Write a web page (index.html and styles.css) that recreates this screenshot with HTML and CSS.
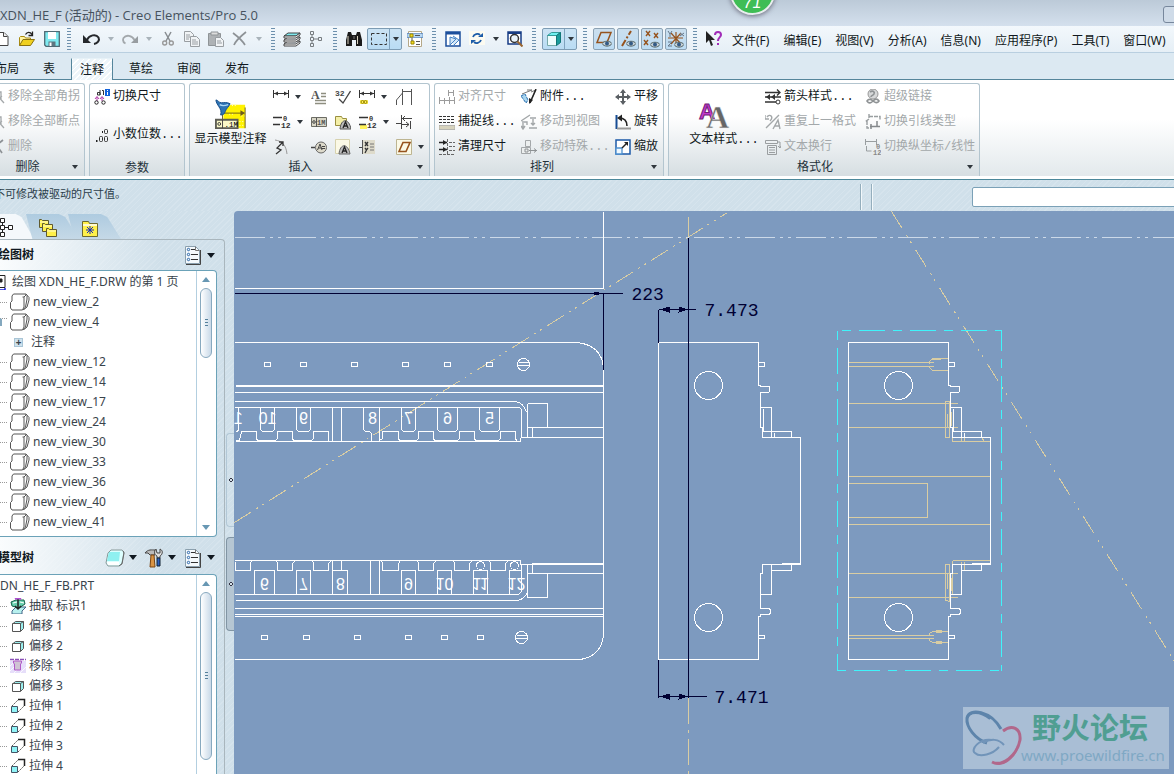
FILE: index.html
```html
<!DOCTYPE html>
<html lang="zh-CN">
<head>
<meta charset="utf-8">
<title>XDN_HE_F (活动的) - Creo Elements/Pro 5.0</title>
<link rel="stylesheet" href="styles.css">
</head>
<body>
<svg class="defs" aria-hidden="true">
  <symbol id="new" viewBox="0 0 16 16"><path d="M2 1.500h8l4 4v9H2z" fill="#fff" stroke="#444"/><path d="M9.500 1.500v4h4" fill="#eee" stroke="#444"/></symbol>
  <symbol id="open" viewBox="0 0 16 16"><path d="M.5 14.500v-8l1-1h4l1 1.500h5v2" fill="#fff3a0" stroke="#a98a10"/><path d="M.5 14.500l3.500-6h11.500l-4 6z" fill="#f0d020" stroke="#8a7210"/><path d="M6.500 3.500C8 1 11 .5 13 3.500M13.500 .5v4h-4" fill="none" stroke="#222" stroke-width="1.300"/></symbol>
  <symbol id="save" viewBox="0 0 16 16"><path d="M.7 .7h14.600v14.600H2l-1.300-1.300z" fill="#7feaf0" stroke="#4f6a74" stroke-width="1.300"/><path d="M4 1h8v7H4z" fill="#fff"/><path d="M4.500 10.500h7V15h-7z" fill="#5d7680"/><path d="M5.500 11.500h2V15h-2z" fill="#fff"/></symbol>
  <symbol id="undo" viewBox="0 0 18 16"><path d="M4 9C6 4 13 2.500 15.500 6.500c1.500 3-1 6-4.500 6.500" fill="none" stroke="#25282c" stroke-width="2"/><path d="M0 4v8h8z" fill="#25282c"/></symbol>
  <symbol id="redo" viewBox="0 0 18 16"><path d="M13.500 9C11 4 5 3.500 2.500 7c-1 2.500 0 4.500 2 5.500" fill="none" stroke="#a3a8ac" stroke-width="1.800"/><path d="M17 5v7h-7z" fill="#989da1"/></symbol>
  <symbol id="cut" viewBox="0 0 16 16"><path d="M5 1l5 9M11 1L6 10" stroke="#888d91" stroke-width="1.500"/><circle cx="4.700" cy="12" r="2" fill="none" stroke="#999" stroke-width="1.400"/><circle cx="11.300" cy="12" r="2" fill="none" stroke="#999" stroke-width="1.400"/></symbol>
  <symbol id="copy" viewBox="0 0 16 16"><g fill="#f1f4f6" stroke="#999ea2"><path d="M.5 .5h6l3 3v7h-9z"/><path d="M6.500 5.500h6l3 3v7h-9z"/></g><path d="M2 4h4M2 6h4M2 8h3M8 9h4M8 11h6M8 13h6" stroke="#999ea2"/></symbol>
  <symbol id="paste" viewBox="0 0 16 16"><path d="M.5 2.500h12v12H.5z" fill="#aeb2b5" stroke="#8f9497"/><path d="M3 1h7v3H3z" fill="#ddd" stroke="#8f9497"/><path d="M7.500 6.500h5l3 3v6h-8z" fill="#f1f4f6" stroke="#999ea2"/><path d="M9 10h4M9 12h5" stroke="#999ea2"/></symbol>
  <symbol id="del" viewBox="0 0 16 16"><path d="M1 2c4 3 9 7 12 12M14 1C9 5 4 9 2 14" fill="none" stroke="#8d9296" stroke-width="1.700"/></symbol>
  <symbol id="layers" viewBox="0 0 18 16"><g stroke="#444"><path d="M1 13l4-3h12l-4 3zM1 13v2h12l4-3v-2" fill="#fff"/><path d="M1 9l4-3h12l-4 3zM1 9v2h12l4-3V6" fill="#fff"/><path d="M1 5l4-3h12l-4 3z" fill="#7fe9ee"/><path d="M1 5v2h12l4-3V2l-4 3z" fill="#fff"/></g></symbol>
  <symbol id="nodes" viewBox="0 0 16 16"><g fill="none" stroke="#777c80"><path d="M2.500 .5h3v3h-3zM2.500 6.500h3v3h-3zM2.500 12.500h3v3h-3zM10.500 6.500h3v3h-3zM4 4v2M4 10v2M6 8h4"/></g></symbol>
  <symbol id="binoc" viewBox="0 0 18 16"><path d="M3 1h3l1 3h4l1-3h3l2 8v6h-6V9H7v6H1V9z" fill="#1b1b1b"/><path d="M3 5v8M12.500 5v8" stroke="#d8d2c0"/><path d="M9 5v3" stroke="#777"/></symbol>
  <symbol id="marquee" viewBox="0 0 18 16"><path d="M1.500 2.500h15v11h-15z" fill="none" stroke="#333" stroke-dasharray="3 2"/></symbol>
  <symbol id="mtree" viewBox="0 0 16 16"><path d="M1.500 .5h13v15h-13z" fill="#fff" stroke="#b5a888"/><path d="M0 2.500h16v4H0z" fill="#b6d6f2" stroke="#3d6fae" stroke-width=".6"/><path d="M3 3h3v3H3zM4 10h3v3H4z" fill="#f5df20" stroke="#9a8600"/><path d="M8 4.500h5M9 10.500h4M9 13.500h4M5 7v3" stroke="#555"/></symbol>
  <symbol id="repaint" viewBox="0 0 16 16"><path d="M1 1h14v14H1z" fill="#fff" stroke="#1c4f9c" stroke-width="1.500"/><path d="M1 1h14v2.500H1z" fill="#1c4f9c"/><path d="M5 6l6 2-6 6zM8 5l6 4-6 6" fill="#d3e7f8" stroke="#4582c4"/></symbol>
  <symbol id="refresh" viewBox="0 0 16 16"><path d="M0 0h16v14H0z" fill="#fcfbf1"/><path d="M4 6c1-3 5-4 7-2M12 9c-1 3-5 4-7 2" fill="none" stroke="#1c5ca8" stroke-width="1.800"/><path d="M9 6h5V2zM7 9H2v4z" fill="#1c5ca8"/></symbol>
  <symbol id="zoomfit" viewBox="0 0 16 16"><path d="M1 1h13v12H1z" fill="#fff" stroke="#173d85" stroke-width="1.500"/><path d="M1 1h13v2H1z" fill="#173d85"/><circle cx="7.500" cy="7.500" r="4" fill="#e8f3fb" stroke="#333" stroke-width="1.500"/><path d="M10.500 10.500l5 5" stroke="#9a6630" stroke-width="2"/></symbol>
  <symbol id="cube" viewBox="0 0 16 16"><path d="M1.500 4.500h9v10h-9z" fill="#eefcfc" stroke="#7aa"/><path d="M1.500 4.500l4-3h9l-4 3z" fill="#6ff0f0" stroke="#399"/><path d="M10.500 4.500l4-3v10l-4 3z" fill="#1a9c9c" stroke="#177"/></symbol>
  <symbol id="eye" viewBox="0 0 10 6"><path d="M0 3C2 0 8 0 10 3 8 6.500 2 6.500 0 3z" fill="#c9d3d8" stroke="#566"/><circle cx="5" cy="3" r="2" fill="#345b86"/></symbol>
  <symbol id="plane" viewBox="0 0 18 18"><path d="M2 12.500L6 2.500h10l-4 10z" fill="none" stroke="#96531d" stroke-width="1.500"/><use href="#eye" x="7" y="10" width="10" height="7"/></symbol>
  <symbol id="axis" viewBox="0 0 18 18"><path d="M3 16L12 1" stroke="#96531d" stroke-width="2" stroke-dasharray="7 2 2 2"/><use href="#eye" x="7" y="10" width="10" height="7"/></symbol>
  <symbol id="points" viewBox="0 0 18 18"><path d="M3 1l4 5M7 1L3 6M11 3l4 5M15 3l-4 5M1 10l4 5M5 10l-4 5" stroke="#96531d" stroke-width="1.400"/><use href="#eye" x="7" y="11" width="10" height="7"/></symbol>
  <symbol id="csys" viewBox="0 0 18 18"><path d="M1 8h15M9 2v11M4 3l10 11M14 3L4 14" stroke="#96531d" stroke-width="1.200"/><path d="M1 1l2 3 2-3M3 4v3M13 3l4 3M17 3l-4 3M1 12h4l-4 4h4" fill="none" stroke="#678"/><use href="#eye" x="7" y="11" width="10" height="7"/></symbol>
  <symbol id="what" viewBox="0 0 16 16"><path d="M0 0v12l3-3 2 6 2-1-2-5h4z" fill="#222"/><path d="M9 4c0-4 6-4 6 0 0 2-3 2.500-3 6M12 12v2" fill="none" stroke="#a12cb8" stroke-width="2"/></symbol>
  <symbol id="jog" viewBox="0 0 16 16"><path d="M2 3h10v7M5 13l8-6M8 6l7 8" fill="none" stroke="#a4a8aa" stroke-width="1.300"/></symbol>
  <symbol id="swapdim" viewBox="0 0 16 16"><path d="M6 1v5M3.500 3.500H6V6H3.500zM8 1.500h1.500V6" fill="none" stroke="#333"/><path d="M3 8v4M8 8v4M1 10l2-2.500L5 10M6 10l2-2.500L10 10" fill="none" stroke="#b23aa8"/><circle cx="2.500" cy="13.500" r="1.700" fill="none" stroke="#222"/><circle cx="9.500" cy="13.500" r="1.700" fill="none" stroke="#222"/><path d="M11 0h5v7h-5z" fill="#1464dc"/><path d="M13.500 1v1M13.500 3v3" stroke="#fff"/></symbol>
  <symbol id="decimal" viewBox="0 0 16 16"><path d="M2 13h1.500v2H2zM8 4h1v2H8z" fill="#222"/><rect x="5.500" y="9.500" width="3" height="5" rx="1" fill="none" stroke="#333"/><rect x="10.500" y="9.500" width="3" height="5" rx="1" fill="none" stroke="#333"/><rect x="10.500" y="2.500" width="3" height="4" rx="1" fill="none" stroke="#333"/></symbol>
  <symbol id="showann" viewBox="0 0 34 34"><path d="M9 10l8-4h15v25H9z" fill="#fff200"/><path d="M10 8h2M18 7h5M25 5h5M15 16h4M28 18h4M26 24h6M26 28h6" stroke="#fff" stroke-dasharray="1 2"/><path d="M10 15h20M32 9v22M8 16v6" stroke="#6c5b1c"/><path d="M27 12l5 3-5 3z" fill="#6c5b1c"/><path d="M1 1c2 0 3 3 6 3s5-1 9 1c-1 3-4 5-5 8-1 3-2 4-5 4 1-4 0-6-2-9C3 6 1 4 1 1z" fill="#2e74b4" stroke="#164d89"/><path d="M5 6c3 2 6 1 9 0" fill="none" stroke="#acd7f5" stroke-width="1.500"/><path d="M1 22h23v9H1z" fill="#fbf9c8" stroke="#5e5e55" stroke-width="2"/><path d="M8 22v9" stroke="#444"/><circle cx="4.500" cy="26.500" r="1.500" fill="none" stroke="#333"/><text x="10" y="30" font-size="8">.1M</text></symbol>
  <symbol id="dim" viewBox="0 0 16 16"><path d="M.5 1v8M15.500 1v8M1 4.500h14" stroke="#333"/><path d="M1 4.500l4-2v4zM15 4.500l-4-2v4z" fill="#333"/></symbol>
  <symbol id="dimy" viewBox="0 0 16 16"><use href="#dim" width="16" height="16"/><path d="M1 11h8v4H1z" fill="#fff25a"/><circle cx="3.500" cy="13" r="1.500" fill="none" stroke="#9a8500"/><circle cx="6.500" cy="13" r="1.500" fill="none" stroke="#9a8500"/></symbol>
  <symbol id="note" viewBox="0 0 16 16"><text x="0" y="10" font-size="12" font-weight="bold" font-family="Liberation Serif" fill="#555">A</text><path d="M10 4.500h5M10 7.500h5M4 11.500h11M4 14.500h11" stroke="#8e8e80" stroke-width="1.300"/></symbol>
  <symbol id="surf" viewBox="0 0 16 16"><text x="0" y="7" font-size="8" font-weight="bold" fill="#444">32</text><path d="M4 10l4 4L15.500 2" fill="none" stroke="#444" stroke-width="1.300"/></symbol>
  <symbol id="cham" viewBox="0 0 16 16"><path d="M.5 16V11l6-7M6.500 0v16M15.500 0v16M7 2.500h8" fill="none" stroke="#555"/></symbol>
  <symbol id="ord" viewBox="0 0 18 16"><path d="M0 3.500h9M0 10.500h7" stroke="#333" stroke-width="1.500"/><text x="10" y="7" font-size="7" font-weight="bold" fill="#333">0</text><text x="8" y="14" font-size="8" font-weight="bold" fill="#333">12</text></symbol>
  <symbol id="ordy" viewBox="0 0 18 16"><path d="M1 11h7v4H1z" fill="#fff25a"/><use href="#ord" width="18" height="16"/></symbol>
  <symbol id="gtol" viewBox="0 0 16 16"><path d="M.5 3.500h15v9H.5z" fill="#d8d6c6" stroke="#6c6c64"/><path d="M5.500 4v9" stroke="#555"/><circle cx="3" cy="8" r="1.300" fill="none" stroke="#444"/><text x="6" y="11" font-size="7" font-weight="bold" fill="#555">1M</text></symbol>
  <symbol id="foldera" viewBox="0 0 16 16"><path d="M.5 11.500v-9h6l1 2h4v7z" fill="#f4efa8" stroke="#9a9040"/><path d="M5 15c1-11 9-11 11 0z" fill="#bbb" stroke="#555"/><path d="M8 14l2.500-6 2.500 6M9 12h3" fill="none" stroke="#222" stroke-width="1.300"/></symbol>
  <symbol id="ordbreak" viewBox="0 0 16 16"><path d="M5.500 1v14M6 4.500h10M9 2L6.500 4.500 9 7M0 9.500h5M6 10.500h7M14.500 7v8M10 8l3 2.500-3 2.500" fill="none" stroke="#444"/></symbol>
  <symbol id="arc" viewBox="0 0 16 16"><path d="M2 1c7 1 11 5 12 14" fill="none" stroke="#999"/><path d="M3 15l5-4-4-2 6-6M10 7V3H6" fill="none" stroke="#333" stroke-width="1.300"/></symbol>
  <symbol id="balloon" viewBox="0 0 16 16"><path d="M0 8.500h4" stroke="#444" stroke-width="1.500"/><circle cx="10" cy="8.500" r="5.500" fill="#dddacb" stroke="#666"/><path d="M6.500 11L9 5l2 6M7.500 9h3M11 7.500h3M11 9.500h3" fill="none" stroke="#444"/></symbol>
  <symbol id="pagea" viewBox="0 0 16 16"><path d="M.5 .5h14v14H.5z" fill="#fbf9e6" stroke="#d7d2ae"/><path d="M4 15c1-11 9-11 11 0z" fill="#bbb" stroke="#666"/><path d="M7 14l2.500-6 2.500 6M8 12h3" fill="none" stroke="#222" stroke-width="1.300"/></symbol>
  <symbol id="xy" viewBox="0 0 16 16"><path d="M3 1h13v14H3z" fill="#dedbcb"/><path d="M0 8.500h4" stroke="#444"/><path d="M3.500 1v14" stroke="#555"/><path d="M6 3l3 4M9 3L6 7M6 9l1.500 2L9 9M7.500 11L6 14" fill="none" stroke="#333" stroke-width="1.300"/><path d="M11 5h4M11 8h4M11 11h4" stroke="#777"/></symbol>
  <symbol id="dplane" viewBox="0 0 16 16"><path d="M.5 .5h15v15H.5z" fill="#fbf9e6" stroke="#bdb591"/><path d="M3 12.500L7 3.500h7l-4 9z" fill="none" stroke="#96531d" stroke-width="1.600"/></symbol>
  <symbol id="aligndim" viewBox="0 0 16 16"><path d="M.5 8v7M5.500 9v6M10.500 8v7M15.500 8v7M0 11.500h16M9.500 1v6M14.500 1v6M9 3.500h6" fill="none" stroke="#9c9c9c"/></symbol>
  <symbol id="snap" viewBox="0 0 16 16"><path d="M0 2.500h16M0 5.500h16M0 8.500h16" stroke="#333" stroke-width="1.200" stroke-dasharray="3 1"/><path d="M0 11.500h16v4H0z" fill="#d7d3bd" stroke="#888" stroke-width=".5"/></symbol>
  <symbol id="clean" viewBox="0 0 16 16"><path d="M0 3.500h8M0 10.500h8" stroke="#222" stroke-width="1.500"/><path d="M4 1l4 2.500L4 6zM4 8l4 2.500L4 13z" fill="#222"/><path d="M8.500 0v15M10 3.500h6M10 7.500h6M10 11.500h6M0 15.500h16" stroke="#666" stroke-dasharray="3 1"/></symbol>
  <symbol id="attach" viewBox="0 0 16 16"><path d="M1 5L11 1H6M15 1l-4 8M15 1l-5 2" fill="none" stroke="#777"/><path d="M15 0l-6 14" stroke="#222" stroke-width="1.500"/><path d="M0 7l4-2 3 6-2 3z" fill="#a8d5ef" stroke="#256cae" stroke-dasharray="3 1"/><path d="M8 15v-6l4 2z" fill="#222"/></symbol>
  <symbol id="moveview" viewBox="0 0 16 16"><path d="M0 7l9-6M1 8h5v3M9 4h6M12 5v6M10 9l2 2 2-2M8 14h8M2 9v6M0 12l2 3 2-3" fill="none" stroke="#a3a7a9" stroke-width="1.400"/></symbol>
  <symbol id="movesp" viewBox="0 0 16 16"><path d="M4.500 1.500h5v6h-5zM.5 8.500h9v6h-9z" fill="#ecefef" stroke="#a3a7a9"/><path d="M4 10h3v3H4zM8 11.500h8M13 9.500l2.500 2-2.500 2" fill="none" stroke="#8e9294"/></symbol>
  <symbol id="pan" viewBox="0 0 16 16"><path d="M8 0l3 4H9v3h3V5l4 3-4 3V9H9v3h2l-3 4-3-4h2V9H4v2L0 8l4-3v2h3V4H5z" fill="#5a5f63"/></symbol>
  <symbol id="rot" viewBox="0 0 16 16"><path d="M1.500 1v14" stroke="#174d95" stroke-width="2"/><path d="M2 14.500h14" stroke="#999" stroke-width="2"/><path d="M4 4c5 0 8 3 8 8" fill="none" stroke="#222" stroke-width="1.600"/><path d="M2 4l5-3.500v7z" fill="#222"/></symbol>
  <symbol id="scale" viewBox="0 0 16 16"><path d="M1 1h14v14H1z" fill="#fff" stroke="#1d5aa8" stroke-width="1.500"/><path d="M1 9h6v6H1z" fill="#eff8ff" stroke="#4d90d0" stroke-width="1.300"/><path d="M7 9l5-5" stroke="#222" stroke-width="1.500"/><path d="M9 3h4v4z" fill="#222"/></symbol>
  <symbol id="tstyle" viewBox="0 0 32 32"><text x="1" y="20" font-size="22" font-family="Liberation Sans" font-weight="bold" fill="#c23acb" stroke="#702078">A</text><text x="8" y="29" font-size="32" font-family="Liberation Serif" font-weight="bold" fill="#666" stroke="#eee" stroke-width=".4">A</text></symbol>
  <symbol id="arrows" viewBox="0 0 16 16"><path d="M0 3.500h15M0 8h16M0 13h11M12 .5l3 3-3 3" fill="none" stroke="#333" stroke-width="1.300"/><path d="M1 8l4-3v6zM6 8l4-3v6z" fill="#333"/><circle cx="13" cy="13" r="2" fill="#fff" stroke="#333"/></symbol>
  <symbol id="repeat" viewBox="0 0 16 16"><path d="M2 3c3-4 7 0 3 4M1 14L14 1M8 15l5-9 2 9M10 12h5M0 1v4h4" fill="none" stroke="#a3a7a9" stroke-width="1.400"/></symbol>
  <symbol id="wrap" viewBox="0 0 16 16"><path d="M.5 1.500h12v3H.5zM2.500 6.500h9v9h-9zM4 8.500h6M4 11h6M4 13.500h6M12 3h3v6M13 7l2 2 1-2" fill="none" stroke="#9a9ea0"/></symbol>
  <symbol id="link" viewBox="0 0 16 16"><circle cx="8" cy="5" r="5" fill="#d6d8d9" stroke="#999"/><path d="M5 3c3-2 5 0 4 2s-3 1-3 3M2 12c2-3 5-1 6 0s4 3 6 0c-2-3-4-2-6 0s-4 3-6 0z" fill="none" stroke="#8e9294" stroke-width="1.600"/></symbol>
  <symbol id="leader" viewBox="0 0 16 16"><path d="M4 2.500h11v4M4 0v5L0 8M2 7v7h3" fill="none" stroke="#999ea0" stroke-width="1.400" stroke-dasharray="4 1"/><path d="M5 12.500h10M12 7v5M6 10v5" fill="none" stroke="#85898c" stroke-width="1.500"/></symbol>
  <symbol id="ordtog" viewBox="0 0 16 16"><path d="M.5 0v6M11.500 0v6M1 2.500h10M1.500 7v5h5" fill="none" stroke="#999ea0"/><text x="11" y="10" font-size="7" font-weight="bold" fill="#888">0</text><text x="8" y="16" font-size="7" font-weight="bold" fill="#888">12</text></symbol>
  <symbol id="view" viewBox="0 0 20 18"><path d="M3 2.500L4.500 1H16l3 3v3l-2 8-2 2H1.500L.5 15V9.500L2 8z" fill="#fff"/><path d="M.5 15V9.500L2 8V3l1.500-2H16v1l-2 2H12.500M14 4v10l-1.500 3H2L.5 15M17 2.500V6l-1.500 8-2.500 3M19 4.500V7l-2 7-3 2.500M16 1l3 3.500" fill="none" stroke="#555"/></symbol>
  <symbol id="sheet" viewBox="0 0 16 16"><path d="M0 1.500h15v12H0z" fill="#fff" stroke="#222"/><path d="M9 5h3v3H9zM6 6h3" fill="#222" stroke="#222"/><path d="M7 14v2h8v-2" fill="none" stroke="#1a20d8" stroke-width="1.500"/></symbol>
  <symbol id="offset" viewBox="0 0 16 16"><path d="M2.500 6l3-2.500h8v7l-3 3" fill="#99eeee" stroke="#555"/><path d="M2.500 5.500h8v8h-8z" fill="#fff" stroke="#555"/><path d="M10.500 5.500l3-2" stroke="#555"/></symbol>
  <symbol id="extract" viewBox="0 0 16 16"><path d="M2 13l4-4h10l-4 4v3H2z" fill="#b7f0ee" stroke="#468"/><path d="M1 4l5-2h8l1 4-6 4-7-2z" fill="#67d0ae" stroke="#16604a"/><path d="M3 5l4-1M10 4l4 1" stroke="#fff"/><path d="M8 0v10M5 8l3 3 3-3" fill="none" stroke="#222" stroke-width="1.500"/><path d="M5 1c2-1 4-1 6 0" fill="none" stroke="#b050d0" stroke-width="2"/></symbol>
  <symbol id="remove" viewBox="0 0 16 16"><path d="M0 3h16v12H0z" fill="#e6defa"/><path d="M0 8l4-4M0 13l5-5M10 15l6-6M4 15l3-3" stroke="#faf8ff"/><path d="M0 1.500h16" stroke="#8a4fb8" stroke-width="1.500" stroke-dasharray="4 1"/><path d="M3.500 3v2l1 1v6h6V6l1-1V3z" fill="#cfc4d3" stroke="#b05ac8"/></symbol>
  <symbol id="extrude" viewBox="0 0 16 16"><path d="M2 8l7-7M8 14l7-7" stroke="#555" stroke-dasharray="2 1"/><path d="M1.500 8.500h6v6h-6z" fill="#8ff2f6" stroke="#456"/><path d="M8 1.500h6.500V8" fill="none" stroke="#222" stroke-width="1.500"/></symbol>
  <symbol id="list" viewBox="0 0 18 20"><path d="M1.500 1.500h10l4 4v13h-14z" fill="#f4f9fc" stroke="#8ba0ae"/><path d="M16.500 5v14.500H2" fill="none" stroke="#444"/><path d="M11.500 1.500v4h4" fill="none" stroke="#777"/><path d="M7 4.500h4M7 9.500h7M7 14.500h7" stroke="#333"/><circle cx="4.500" cy="4.500" r="1.200" fill="none" stroke="#2563a8"/><circle cx="4.500" cy="9.500" r="1.200" fill="none" stroke="#2563a8"/><circle cx="4.500" cy="14.500" r="1.200" fill="none" stroke="#2563a8"/></symbol>
  <symbol id="slab" viewBox="0 0 20 20"><path d="M3 5l3-3h11l2 2-2 11-3 3H3l-2-3z" fill="#dff" stroke="#899"/><path d="M4 4h11l-1 9H2z" fill="#8ff0f0"/><path d="M2 14h12v3H3z" fill="#fff"/><path d="M18 3l1 2-2 11-3 2" fill="none" stroke="#666"/></symbol>
  <symbol id="tools" viewBox="0 0 20 20"><path d="M1 5c3-4 7-3 10-3v5H6L4 5z" fill="#bbb" stroke="#444"/><path d="M7 7h3l1 12H6z" fill="#d99445" stroke="#7a4614"/><path d="M12 1l1 4 3 0V1c4 2 2 6 0 7v2h-3V8c-3-1-3-5-1-7z" fill="#ddd" stroke="#444"/><path d="M13 10h3v8h-3z" fill="#2b5fc0" stroke="#123"/></symbol>
  <symbol id="ptree" viewBox="0 0 20 20"><path d="M5.500 .5h4v4h-4zM5.500 7.500h4v4h-4zM5.500 14.500h4v4h-4zM13.500 7.500h4v4h-4zM7.500 5v2M7.500 12v2M10 9.500h3M0 9.500h5" fill="#fff" stroke="#222"/></symbol>
  <symbol id="folders" viewBox="0 0 20 20"><g fill="#fff04a" stroke="#5f5a30"><path d="M1.500 9.500v-8h2l1 1h6v7z"/><path d="M4.500 13.500v-8h2l1 1h7v7z"/><path d="M8.500 18.500v-8h2l1 1h7v7z"/></g><path d="M2 4h8M5 8h9M9 13h9" stroke="#fffbd0"/></symbol>
  <symbol id="fav" viewBox="0 0 20 20"><path d="M2.500 18.500v-15h6l1 2h8v13z" fill="#fff04a" stroke="#6f6a30"/><path d="M3 6h14v2H3z" fill="#fffbd0"/><path d="M10 8v8M6 12h8M7 9l6 6M13 9l-6 6" stroke="#1b2fb5"/></symbol>
</svg>

<header class="titlebar">
  <h1>XDN_HE_F (活动的) - Creo Elements/Pro 5.0</h1>
  <div class="gauge">71</div>
  <button class="winbtn" aria-label="最小化"></button>
</header>

<div class="toolbar">
  <div class="tools first">
    <button class="tool" aria-label="新建"><svg><use href="#new"/></svg></button>
    <button class="tool" aria-label="打开"><svg><use href="#open"/></svg></button>
    <button class="tool" aria-label="保存"><svg><use href="#save"/></svg></button>
  </div>
  <i class="grip"></i>
  <div class="tools edit">
    <button class="tool" aria-label="撤消"><svg class="w18"><use href="#undo"/></svg></button>
    <button class="caret dim" aria-label="撤消列表"></button>
    <button class="tool" aria-label="重做"><svg class="w18"><use href="#redo"/></svg></button>
    <button class="caret dim" aria-label="重做列表"></button>
    <button class="tool" aria-label="剪切"><svg><use href="#cut"/></svg></button>
    <button class="tool" aria-label="复制"><svg><use href="#copy"/></svg></button>
    <button class="tool" aria-label="粘贴"><svg><use href="#paste"/></svg></button>
    <button class="tool" aria-label="清除"><svg><use href="#del"/></svg></button>
    <button class="caret dim" aria-label="清除列表"></button>
  </div>
  <i class="grip"></i>
  <div class="tools">
    <button class="tool" aria-label="图层"><svg class="w18"><use href="#layers"/></svg></button>
    <button class="tool" aria-label="结构"><svg><use href="#nodes"/></svg></button>
  </div>
  <i class="grip"></i>
  <div class="tools">
    <button class="tool" aria-label="查找"><svg class="w18"><use href="#binoc"/></svg></button>
    <span class="split"><button class="tool" aria-label="选取"><svg class="w18"><use href="#marquee"/></svg></button><button class="caret" aria-label="选取列表"></button></span>
    <button class="tool" aria-label="模型树"><svg><use href="#mtree"/></svg></button>
  </div>
  <i class="grip"></i>
  <div class="tools">
    <button class="tool" aria-label="重画"><svg><use href="#repaint"/></svg></button>
    <button class="tool" aria-label="刷新"><svg><use href="#refresh"/></svg></button>
    <button class="caret" aria-label="刷新列表"></button>
    <button class="tool" aria-label="重新调整"><svg><use href="#zoomfit"/></svg></button>
  </div>
  <i class="grip"></i>
  <div class="tools">
    <span class="split"><button class="tool" aria-label="着色"><svg><use href="#cube"/></svg></button><button class="caret" aria-label="显示样式"></button></span>
  </div>
  <i class="grip"></i>
  <div class="tools">
    <button class="toggle" aria-label="基准平面"><svg><use href="#plane"/></svg></button>
    <button class="toggle" aria-label="基准轴"><svg><use href="#axis"/></svg></button>
    <button class="toggle" aria-label="基准点"><svg><use href="#points"/></svg></button>
    <button class="toggle" aria-label="坐标系"><svg><use href="#csys"/></svg></button>
  </div>
  <i class="grip"></i>
  <div class="tools">
    <button class="tool" aria-label="帮助"><svg><use href="#what"/></svg></button>
  </div>
  <nav class="menu">
    <button>文件(F)</button><button>编辑(E)</button><button>视图(V)</button><button>分析(A)</button><button>信息(N)</button><button>应用程序(P)</button><button>工具(T)</button><button>窗口(W)</button>
  </nav>
</div>

<nav class="tabs">
  <button>布局</button><button>表</button><button class="active">注释</button><button>草绘</button><button>审阅</button><button>发布</button>
</nav>

<div class="ribbon">
  <section class="group g-del">
    <div class="cols">
      <button class="cmd off"><svg><use href="#jog"/></svg>移除全部角拐</button>
      <button class="cmd off"><svg><use href="#jog"/></svg>移除全部断点</button>
      <button class="cmd off"><svg><use href="#del"/></svg>删除</button>
    </div>
    <h2>删除</h2><button class="caret more" aria-label="更多删除"></button>
  </section>
  <section class="group g-par">
    <div class="cols">
      <button class="cmd"><svg><use href="#swapdim"/></svg>切换尺寸</button>
      <button class="cmd"><svg><use href="#decimal"/></svg>小数位数...</button>
    </div>
    <h2>参数</h2>
  </section>
  <section class="group g-ins">
    <div class="cols">
      <button class="big"><svg><use href="#showann"/></svg>显示模型注释</button>
      <div class="cell"><button class="ico" aria-label="尺寸"><svg><use href="#dim"/></svg></button><button class="caret" aria-label="尺寸列表"></button></div>
      <button class="ico" aria-label="注解"><svg><use href="#note"/></svg></button>
      <button class="ico" aria-label="表面光洁度"><svg><use href="#surf"/></svg></button>
      <div class="cell"><button class="ico" aria-label="参照尺寸"><svg><use href="#dimy"/></svg></button><button class="caret" aria-label="参照尺寸列表"></button></div>
      <button class="ico" aria-label="Z半径尺寸"><svg><use href="#cham"/></svg></button>
      <div class="cell"><button class="ico" aria-label="纵坐标尺寸"><svg class="w18"><use href="#ord"/></svg></button><button class="caret" aria-label="纵坐标列表"></button></div>
      <button class="ico" aria-label="几何公差"><svg><use href="#gtol"/></svg></button>
      <button class="ico" aria-label="符号库"><svg><use href="#foldera"/></svg></button>
      <div class="cell"><button class="ico" aria-label="纵坐标参照"><svg class="w18"><use href="#ordy"/></svg></button><button class="caret" aria-label="纵坐标参照列表"></button></div>
      <button class="ico" aria-label="自动纵坐标"><svg><use href="#ordbreak"/></svg></button>
      <button class="ico" aria-label="半径"><svg><use href="#arc"/></svg></button>
      <button class="ico" aria-label="球标"><svg><use href="#balloon"/></svg></button>
      <button class="ico" aria-label="定制符号"><svg><use href="#pagea"/></svg></button>
      <button class="ico" aria-label="坐标"><svg><use href="#xy"/></svg></button>
      <div class="cell"><button class="ico" aria-label="基准"><svg><use href="#dplane"/></svg></button><button class="caret" aria-label="基准列表"></button></div>
    </div>
    <h2>插入</h2><button class="caret more" aria-label="更多插入"></button>
  </section>
  <section class="group g-arr">
    <div class="cols">
      <button class="cmd off"><svg><use href="#aligndim"/></svg>对齐尺寸</button>
      <button class="cmd"><svg><use href="#attach"/></svg>附件...</button>
      <button class="cmd"><svg><use href="#pan"/></svg>平移</button>
      <button class="cmd"><svg><use href="#snap"/></svg>捕捉线...</button>
      <button class="cmd off"><svg><use href="#moveview"/></svg>移动到视图</button>
      <button class="cmd"><svg><use href="#rot"/></svg>旋转</button>
      <button class="cmd"><svg><use href="#clean"/></svg>清理尺寸</button>
      <button class="cmd off"><svg><use href="#movesp"/></svg>移动特殊...</button>
      <button class="cmd"><svg><use href="#scale"/></svg>缩放</button>
    </div>
    <h2>排列</h2><button class="caret more" aria-label="更多排列"></button>
  </section>
  <section class="group g-fmt">
    <div class="cols">
      <button class="big"><svg><use href="#tstyle"/></svg>文本样式...</button>
      <button class="cmd"><svg><use href="#arrows"/></svg>箭头样式...</button>
      <button class="cmd off"><svg><use href="#link"/></svg>超级链接</button>
      <button class="cmd off"><svg><use href="#repeat"/></svg>重复上一格式</button>
      <button class="cmd off"><svg><use href="#leader"/></svg>切换引线类型</button>
      <button class="cmd off"><svg><use href="#wrap"/></svg>文本换行</button>
      <button class="cmd off"><svg><use href="#ordtog"/></svg>切换纵坐标/线性</button>
    </div>
    <h2>格式化</h2><button class="caret more" aria-label="更多格式化"></button>
  </section>
</div>

<div class="status">
  <p>不可修改被驱动的尺寸值。</p>
  <i class="bar"></i><i class="bar"></i>
  <input type="text" aria-label="过滤器">
</div>

<main class="work">
  <aside class="side">
    <div class="navtabs">
      <button class="on" aria-label="模型树"><svg><use href="#ptree"/></svg></button>
      <button aria-label="文件夹"><svg><use href="#folders"/></svg></button>
      <button aria-label="收藏夹"><svg><use href="#fav"/></svg></button>
    </div>
    <div class="panel">
      <div class="head"><h2>绘图树</h2><button class="hbtn" aria-label="显示"><svg><use href="#list"/></svg><i></i></button></div>
      <div class="tree upper">
        <ul>
          <li class="root"><svg><use href="#sheet"/></svg>绘图 XDN_HE_F.DRW 的第 1 页</li>
          <li class="v"><svg><use href="#view"/></svg>new_view_2</li>
          <li class="v open"><svg><use href="#view"/></svg>new_view_4</li>
          <li class="sub"><b>+</b>注释</li>
          <li class="v"><svg><use href="#view"/></svg>new_view_12</li>
          <li class="v"><svg><use href="#view"/></svg>new_view_14</li>
          <li class="v"><svg><use href="#view"/></svg>new_view_17</li>
          <li class="v"><svg><use href="#view"/></svg>new_view_24</li>
          <li class="v"><svg><use href="#view"/></svg>new_view_30</li>
          <li class="v"><svg><use href="#view"/></svg>new_view_33</li>
          <li class="v"><svg><use href="#view"/></svg>new_view_36</li>
          <li class="v"><svg><use href="#view"/></svg>new_view_40</li>
          <li class="v"><svg><use href="#view"/></svg>new_view_41</li>
        </ul>
        <div class="scroll"><i class="up"></i><span class="thumb short"></span><i class="down"></i></div>
      </div>
      <div class="head low"><h2>模型树</h2>
        <button class="hbtn" aria-label="选取层"><svg><use href="#slab"/></svg><i></i></button>
        <button class="hbtn" aria-label="设置"><svg><use href="#tools"/></svg><i></i></button>
        <button class="hbtn" aria-label="显示"><svg><use href="#list"/></svg><i></i></button>
      </div>
      <div class="tree lower">
        <ul>
          <li class="prt">XDN_HE_F_FB.PRT</li>
          <li class="f"><svg><use href="#extract"/></svg>抽取 标识1</li>
          <li class="f"><svg><use href="#offset"/></svg>偏移 1</li>
          <li class="f"><svg><use href="#offset"/></svg>偏移 2</li>
          <li class="f"><svg><use href="#remove"/></svg>移除 1</li>
          <li class="f"><svg><use href="#offset"/></svg>偏移 3</li>
          <li class="f"><svg><use href="#extrude"/></svg>拉伸 1</li>
          <li class="f"><svg><use href="#extrude"/></svg>拉伸 2</li>
          <li class="f"><svg><use href="#extrude"/></svg>拉伸 3</li>
          <li class="f"><svg><use href="#extrude"/></svg>拉伸 4</li>
        </ul>
        <div class="scroll"><i class="up"></i><span class="thumb"></span></div>
      </div>
    </div>
    <div class="sash"><button aria-label="折叠绘图树"></button><button class="dark" aria-label="折叠模型树"></button></div>
  </aside>

  <div class="canvas">
    <svg class="drawing" viewBox="233.500 210.500 940 563" preserveAspectRatio="xMinYMin slice">
      <defs>
        <g id="profile">
          <path d="M658 342H758V385H760V386H769V391L768 392H760V427H762V437H800V564H762V573H760V608H769L770 610V613L768 614H760V616H758V659H658Z"/>
          <path d="M758 362h6v4h-6M758 635h6v3h-6M760 407h11v30M763 408v23M762 431h29v6M774 432v5M762 427v10M771 564v30h-11M771 570h20v-6M781 563h19"/>
          <circle cx="708" cy="385" r="14"/><circle cx="708" cy="617" r="14"/>
        </g>
      </defs>
      <g class="datum">
        <path d="M234 522L727 212" stroke-dasharray="20 6 2 5 2 6"/>
        <path d="M891 211L1174 661" stroke-dasharray="20 8 2 5 2 8"/>
        <path d="M688 216V237M688 697V774" stroke-dasharray="26 6 3 6"/>
        <path class="pale" d="M234 237H1174" stroke-dasharray="30 5 3 5 3 5"/>
      </g>
      <g class="white">
        <path d="M234 288H603M603 211V288M603 369V633"/>
        <path d="M234 342H577Q601 345 603 367M234 659H580Q602 655 603 633"/>
        <path d="M235 385H603M235 386H603M234 392H603M234 401H515Q523 402 526 412M234 407H519Q521 408 521 411V437H603M235 441H520V437M527 403H547V427H603M527 403V437M532 427V437M527 427H547"/>
        <path d="M238 407v23l-2 1M260 407v22l2 2h10l2-2v-22M296 407v22l2 2h10l2-2v-22M332 407v33M341 407v33M363 407v22l2 2h4l2 2v7M379 407v33M401 407v22l2 2h10l2-2v-22M437 407v22l2 2h16l2-2v-22M479 407v22l2 2h16l2-2v-22"/>
        <path d="M235 440h4l2-9h15v8l2 1h17l2-2v-7h15v8l2 1h17l2-2v-7h15v9M379 440l3-2v-7h16v8l2 1h16l2-2v-7h15v8l2 1h22l2-2v-7h15v8l2 1h22l2-2v-7h15v8l2 1"/>
        <path d="M234 560H520V564H603M531 563H603M234 594H518L521 591V564M235 600H517Q525 598 527 591V564M527 573H603M547 573V597H527V573M532 564V573M234 608H603M234 614H603M234 616H603"/>
        <path d="M235 561v9h15v-8l2-2M275 560l2 2v8h15v-7l3-3M311 560l2 2v8h15v-7l3-3M341 560v9M380 560l2 2v8h16v-7l2-3M416 560l2 2v8h15v-7l3-3M452 560l2 2v8h15v-7l3-3M488 560l2 2v8h15v-7l3-3"/>
        <path d="M254 594v-24h20v24M296 594v-24h14v24M332 560v34M332 570h15v24M370 560v34M379 560v34M401 594v-24h14v24M437 594v-24h14v24M473 594v-24h14v24M509 594v-24h12"/>
        <path d="M264 362h6v4h-6zM300 362h6v4h-6zM351 362h6v4h-6zM402 362h6v4h-6zM444 362h6v4h-6zM486 362h6v4h-6zM261 635h6v4h-6zM303 635h6v4h-6zM354 635h6v4h-6zM405 635h6v4h-6zM441 635h6v4h-6zM477 635h6v4h-6z"/>
        <circle cx="523" cy="364" r="6"/><path d="M518 362h10M517 365h12"/>
        <circle cx="521" cy="637" r="6"/><path d="M516 635h10M515 638h12"/>
        <circle cx="480" cy="565" r="4"/><circle cx="514" cy="565" r="4"/>
      </g>
      <g class="engraved">
        <text transform="translate(234 423) scale(-1 1)">11</text><text transform="translate(267 423) scale(-1 1)">10</text><text transform="translate(303 423) scale(-1 1)">9</text><text transform="translate(372 423) scale(-1 1)">8</text><text transform="translate(408 423) scale(-1 1)">7</text><text transform="translate(447 423) scale(-1 1)">6</text><text transform="translate(489 423) scale(-1 1)">5</text>
        <text transform="translate(264 577) scale(1 -1)">6</text><text transform="translate(303 577) scale(1 -1)">7</text><text transform="translate(340 577) scale(1 -1)">8</text><text transform="translate(408 577) scale(1 -1)">9</text><text transform="translate(444 577) scale(1 -1)">10</text><text transform="translate(480 577) scale(1 -1)">11</text><text transform="translate(516 577) scale(1 -1)">12</text>
      </g>
      <g class="hidden">
        <path d="M848 362H933M848 366H933M848 635H933M848 638H933M947 358H932L929 361V363M947 370H932L929 367V366M931 359h9M947 631H932L929 633V635M947 642H932L929 640V638M936 630h5v2h-5zM936 641h5v2h-5z"/>
        <path d="M848 403H957M848 427H957M848 476H990M848 524H990M848 483H927V517H848M848 573H957M848 597H957"/>
        <path d="M949 401H945V437H949V401M947 413V427M949 407H952M951 411V425M952 437V441H990M961 408V441M964 432V441M981 437l3 4M949 564H945V600L949 601V564M952 560H990M952 560V594M961 561V594M964 561V570M951 577V590M947 573V588"/>
      </g>
      <g class="white"><use href="#profile"/><use href="#profile" x="190"/></g>
      <g class="select">
        <path d="M837 330H1001" stroke-dashoffset="30"/><path d="M1001 330V670" stroke-dashoffset="6"/><path d="M837 670H1001" stroke-dashoffset="35"/><path d="M837 330V670" stroke-dashoffset="34"/>
      </g>
      <g class="dims">
        <path d="M234 293H622M603 293V369M688 237V697M658 309V342M658 309H695M658 659V697M658 696H706"/>
        <path class="tip" d="M603 293l-10-2v4zM659 309l10-3v6zM688 309l-10-3v6zM659 696l10-3v6zM688 696l-10-3v6z"/>
        <text x="631" y="299">223</text><text x="704" y="315">7.473</text><text x="714" y="702">7.471</text>
      </g>
    </svg>
    <div class="brand">
      <svg viewBox="0 0 60 62"><path d="M24 36C12 32 3 20 4 11C6 0 28 4 38 22" fill="none" stroke="#5d84ab" stroke-width="3"/><path d="M4 12C6 4 17 4 27 12" fill="none" stroke="#5d84ab" stroke-width="2"/><path d="M29 33C16 31 7 43 12 46C17 51 30 47 36 40M20 36c8-5 16-4 21 2" fill="none" stroke="#7194b9" stroke-width="2"/><path d="M40 24C49 17 58 21 57 33C54 49 39 60 29 55" fill="none" stroke="#b1688b" stroke-width="3"/><path d="M32 56C40 60 51 51 55 39" fill="none" stroke="#b1688b" stroke-width="2"/></svg>
      <div><strong>野火论坛</strong><span>www.proewildfire.cn</span></div>
    </div>
  </div>
</main>
</body>
</html>
```
FILE: styles.css
```css
*, *::before { box-sizing: border-box; }
body {
  margin: 0;
  height: 100vh;
  overflow: hidden;
  display: flex;
  flex-direction: column;
  background: #d2e1eb;
  color: #101820;
  font: 12px/16px "Noto Sans", "Noto Sans CJK SC", sans-serif;
}
h1, h2, p, ul { margin: 0; padding: 0; font-size: 12px; font-weight: normal; }
ul { list-style: none; }
button {
  margin: 0;
  padding: 0;
  border: 0;
  background: none;
  color: inherit;
  font: inherit;
  white-space: nowrap;
}
svg { width: 16px; height: 16px; flex: none; display: block; }
svg.w18 { width: 18px; }
svg.defs { display: none; }

.titlebar {
  position: relative;
  flex: none;
  height: 26px;
  overflow: hidden;
  background: linear-gradient(#bccad8, #d4e0ed);
}
.titlebar h1 { color: #46525e; font-family: "Open Sans", "Noto Sans CJK SC", sans-serif; font-size: 13px; line-height: 30px; }
.gauge {
  position: absolute;
  left: 730px;
  top: -30px;
  width: 45px;
  height: 45px;
  padding-top: 22px;
  border: 2px solid #e8eeee;
  border-radius: 50%;
  background: #3fbd55;
  color: #fff;
  font: italic 16px/18px "Liberation Sans", sans-serif;
  text-align: center;
  box-shadow: 0 1px 5px #667;
}
.winbtn {
  position: absolute;
  right: -14px;
  top: 6px;
  width: 25px;
  height: 17px;
  border: 1px solid #77879c;
  border-radius: 3px;
  background: #cfdbe8;
}

.toolbar {
  flex: none;
  display: flex;
  align-items: center;
  height: 27px;
  overflow: hidden;
  background: linear-gradient(#f3f8fc, #e6eff6);
  border-bottom: 1px solid #b9cfe0;
}
.tools { display: flex; align-items: center; flex: none; padding: 0 2px; }
.tools.first { margin-left: -10px; padding: 0; gap: 1px; }
.tools.edit { padding-left: 6px; }
.tool { width: 24px; height: 22px; display: grid; place-items: center; }
.grip {
  flex: none;
  width: 4px;
  height: 25px;
  margin: 0 3px;
  background: radial-gradient(circle, #6d90ad 1px, transparent 1px) 0 0 / 2px 3px;
}
.caret { width: 14px; height: 16px; display: grid; place-items: center; color: #30373d; flex: none; }
.caret::before, .hbtn i {
  content: "";
  border: 3px solid transparent;
  border-top: 4px solid currentColor;
  border-bottom: 0;
}
.caret.dim { color: #a9b3ba; }
.split {
  display: flex;
  align-items: center;
  height: 22px;
  margin: 0 1px;
  border: 1px solid #7d9cb4;
  border-radius: 2px;
  background: linear-gradient(#cbe3f4, #b9dcf4);
}
.split .tool { width: 22px; height: 20px; border-right: 1px solid #7fa3bf; }
.split .caret { width: 11px; }
.toggle {
  width: 22px;
  height: 22px;
  margin: 0 1px;
  display: grid;
  place-items: center;
  border: 1px solid #8ca2b4;
  border-radius: 2px;
  background: linear-gradient(#cbdfee, #bcdcf4);
}
.toggle svg { width: 18px; height: 18px; }
.menu { display: flex; gap: 14px; padding: 3px 0 0 4px; flex: none; }

.tabs {
  flex: none;
  display: flex;
  align-items: flex-end;
  height: 27px;
  background: #dce9f2;
  border-bottom: 1px solid #55859b;
}
.tabs button { padding: 0 12px; height: 21px; line-height: 22px; }
.tabs button:first-child { margin-left: -17px; }
.tabs .active {
  height: 22px;
  margin: 0 4px -1px;
  padding: 0 8px;
  border: 1px solid #55859b;
  border-top-color: #e6f1f7;
  border-bottom: 0;
  background: repeating-linear-gradient(135deg, #fff 0 1px, #edf5fa 1px 4px);
}

.ribbon {
  flex: none;
  display: flex;
  gap: 4px;
  height: 100px;
  padding: 3px 0;
  overflow: hidden;
  background: linear-gradient(#fff 40%, #e3e9ec 97%, #fff 97%);
  border-bottom: 1px solid #4b889b;
  font-family: "Liberation Mono", "Noto Sans CJK SC", monospace;
}
.group {
  position: relative;
  flex: none;
  display: flex;
  flex-direction: column;
  border: 1px solid #b3c5cf;
  border-bottom: 0;
  border-radius: 3px 3px 0 0;
  background: linear-gradient(#fff 35%, #d6dee2);
}
.group h2 { padding-right: 18px; text-align: center; line-height: 18px; color: #24313a; }
.more { position: absolute; right: 2px; bottom: 1px; }
.cols { display: grid; grid-template-rows: repeat(3, 25px); height: 76px; }
.g-del { width: 97px; margin-left: -12px; }
.g-par { width: 96px; padding-left: 4px; }
.g-par h2 { padding-right: 4px; }
.g-par .cols { grid-template-rows: 25px 52px; }
.g-ins { width: 241px; }
.g-ins .cols { grid-template-columns: 81px 38px 24px 24px 37px auto; }
.g-arr { width: 230px; padding-left: 4px; }
.g-arr .cols { grid-template-columns: 82px 94px auto; }
.g-fmt { width: 312px; }
.g-fmt .cols { grid-template-columns: 96px 100px auto; }
.cmd { display: flex; align-items: center; gap: 3px; }
.off { color: #a3a8aa; }
.cell { display: flex; align-items: center; }
.cell .caret { width: 18px; }
.ico { display: flex; align-items: center; padding-left: 2px; }
.big {
  grid-row: 1 / 4;
  display: flex;
  flex-direction: column;
  align-items: center;
  justify-content: flex-end;
  gap: 1px;
  padding-bottom: 11px;
}
.big svg { width: 32px; height: 32px; }
.g-fmt .big { padding-left: 14px; }
.g-fmt .big svg { margin-right: 20px; }

.status, .side {
  background: repeating-linear-gradient(135deg, #d6e4ed 0 1px, #d0e0ea 1px 4px);
}
.status { flex: none; display: flex; height: 31px; overflow: hidden; }
.status p { flex: 1; margin-left: -6px; color: #2b3d49; font-size: 11px; line-height: 27px; }
.bar { width: 2px; margin: 4px 9px 1px 0; background: #f2f8fb; border-left: 1px solid #94aebd; }
.status input {
  width: 216px;
  height: 20px;
  margin: 7px -14px 0 90px;
  border: 1px solid #7ba1b7;
  border-radius: 2px;
  background: #fff;
}

.work { flex: 1; min-height: 0; display: flex; }
.side {
  flex: none;
  width: 234px;
  display: grid;
  grid-template: 28px minmax(0, 1fr) / 225px 9px;
}
.navtabs { display: flex; grid-column: 1 / 3; padding-top: 3px; }
.navtabs button {
  width: 53px;
  height: 25px;
  margin-right: -11px;
  padding: 2px 0 0 12px;
  background: linear-gradient(#aecbe0, #c5d9e7);
  clip-path: polygon(0 0, 62% 0, 74% 12%, 100% 100%, 12% 100%);
}
.navtabs button:first-child { width: 48px; margin-left: -14px; margin-right: -8px; padding-left: 9px; }
.navtabs .on { background: #f4f8fb; }
.navtabs svg { width: 20px; height: 20px; }
.panel {
  min-height: 0;
  display: flex;
  flex-direction: column;
  border: 1px solid #a9b6bd;
  border-width: 1px 1px 0 0;
  border-radius: 0 4px 0 0;
}
.head {
  flex: none;
  display: flex;
  align-items: center;
  height: 30px;
  padding-right: 8px;
  gap: 4px;
  background: linear-gradient(90deg, #fafcfd, transparent 160px);
}
.head.low { height: 37px; padding-top: 4px; }
.head h2 { flex: 1; margin-left: -2px; font-weight: bold; }
.hbtn { display: flex; align-items: center; gap: 4px; }
.hbtn svg { width: 20px; height: 20px; }
.hbtn i { border-width: 5px 4px 0; margin-right: 1px; }
.hbtn + .hbtn { margin-left: 2px; }
.tree {
  display: flex;
  min-height: 0;
  margin-right: 7px;
  background: #fff;
  border: 1px solid #6ba2b8;
  border-left: 0;
  border-radius: 0 4px 4px 0;
  color: #39434b;
}
.tree.upper { flex: 267; }
.tree.lower { flex: 200; border-bottom: 0; border-radius: 0 4px 0 0; }
.tree ul { flex: 1; padding-top: 1px; overflow: hidden; }
.tree li { display: flex; align-items: center; height: 20px; white-space: nowrap; }
.tree li.v, .tree li.f { gap: 3px; }
.v svg { width: 20px; height: 18px; }
.v::before, .f::before { content: ""; width: 7px; flex: none; border-top: 1px dotted #999; }
.root svg { margin-left: -10px; margin-right: 6px; }
.v.open::before { border-left: 2px solid #84a8be; height: 8px; }
.sub b {
  width: 9px;
  height: 9px;
  margin: 0 8px 0 14px;
  background: #cfe2ee;
  border: 1px solid #a9c5d6;
  font-size: 10px;
  line-height: 7px;
  text-align: center;
}
.prt { margin-left: -7px; }
.scroll {
  flex: none;
  width: 20px;
  display: flex;
  flex-direction: column;
  align-items: center;
  padding: 6px 1px 6px 0;
  border-left: 1px solid #b3cfe0;
}
.scroll i { border: 4px solid transparent; }
.scroll .up { border-top: 0; border-bottom: 5px solid #6797b3; }
.scroll .down { border-bottom: 0; border-top: 5px solid #6797b3; margin-top: auto; }
.thumb {
  flex: 1;
  width: 12px;
  margin: 6px 0 8px;
  border: 1px solid #88a9bf;
  border-radius: 6px;
  background: repeating-linear-gradient(#56809b 0 1px, transparent 1px 3px) center / 3px 9px no-repeat, linear-gradient(90deg, #fff, #c9d9e8);
}
.thumb.short { flex: 0 0 70px; }
.sash { display: flex; flex-direction: column; padding: 194px 0 0 1px; gap: 10px; }
.sash button {
  height: 94px;
  border: 1px solid #b1c7d6;
  border-right: 0;
  border-radius: 4px 0 0 4px;
  background: radial-gradient(circle at 4px 50%, #d5e2ea 1px, #334 1px 2px, transparent 2px);
}
.sash .dark { border-color: #8195a4; background-color: #b5c6d3; }

.canvas { position: relative; flex: 1; overflow: hidden; border-radius: 4px 0 0 0; background: #7d9abf; }
.drawing { width: 100%; height: 100%; fill: none; shape-rendering: crispEdges; }
.white { stroke: #fff; }
.datum, .hidden { stroke: #d9cda3; }
.pale { stroke: #ccd9e8; }
.select { stroke: #3ff4fb; stroke-dasharray: 26 8 9 8; }
.dims { stroke: #000033; }
.tip { fill: #000033; stroke: none; }
.dims text { fill: #000033; stroke: none; font: 18px "Liberation Mono", monospace; }
.engraved text { fill: #fff; font: 16px "Liberation Sans", sans-serif; text-anchor: middle; }
.brand {
  position: absolute;
  right: 5px;
  bottom: 5px;
  width: 206px;
  height: 62px;
  display: flex;
  background: #a9bed5;
}
.brand svg { width: 60px; height: 62px; }
.brand div { display: flex; flex-direction: column; margin-left: -2px; }
.brand strong { padding-left: 11px; color: #509e92; font: bold 29px/38px "Noto Sans CJK SC", sans-serif; }
.brand span { color: #7fa8c4; font: 15px/20px "Noto Sans", sans-serif; }
```
